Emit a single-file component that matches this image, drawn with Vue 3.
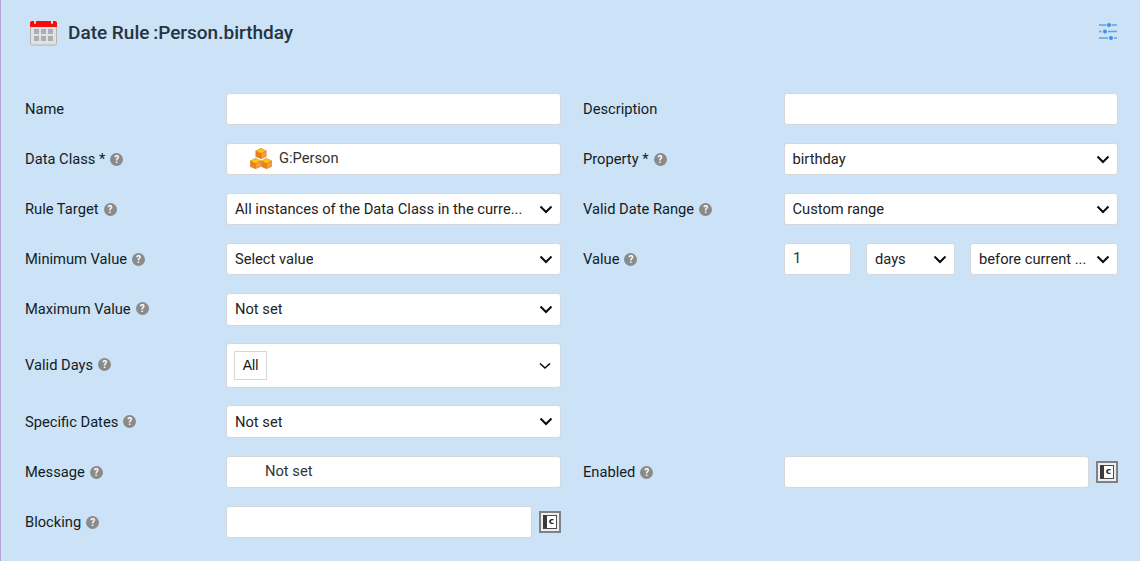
<script setup>
// each row has a left and optional right field
const rows = [
  { h: 32, mt: 0, left: { label: 'Name', type: 'input' }, right: { label: 'Description', type: 'input' } },
  { h: 32, mt: 18, left: { label: 'Data Class *', help: true, type: 'class', value: 'G:Person' }, right: { label: 'Property *', help: true, type: 'select', value: 'birthday' } },
  { h: 32, mt: 18, left: { label: 'Rule Target', help: true, type: 'select', value: 'All instances of the Data Class in the curre...' }, right: { label: 'Valid Date Range', help: true, type: 'select', value: 'Custom range' } },
  { h: 32, mt: 18, left: { label: 'Minimum Value', help: true, type: 'select', value: 'Select value' }, right: { label: 'Value', help: true, type: 'value' } },
  { h: 33, mt: 18, tight: true, left: { label: 'Maximum Value', help: true, type: 'select', value: 'Not set' } },
  { h: 45, mt: 17, tight: true, left: { label: 'Valid Days', help: true, type: 'multi', value: 'All' } },
  { h: 33, mt: 17, left: { label: 'Specific Dates', help: true, type: 'select', value: 'Not set' } },
  { h: 32, mt: 18, left: { label: 'Message', help: true, type: 'message', value: 'Not set' }, right: { label: 'Enabled', help: true, type: 'check' } },
  { h: 32, mt: 18, left: { label: 'Blocking', help: true, type: 'check' } },
]
</script>

<template>
  <div class="page">
    <header class="head">
      <svg class="cal" width="28" height="26" viewBox="0 0 28 26">
        <rect x="0.5" y="3" width="26" height="22" rx="1.500" fill="#dde2e6" stroke="#b3b3b3" />
        <path d="M0 7V3a2 2 0 0 1 2-2h23a2 2 0 0 1 2 2v4z" fill="#f40f0f" />
        <rect x="4" y="0" width="2" height="4" rx="1" fill="#f7dcdc" />
        <rect x="21" y="0" width="2" height="4" rx="1" fill="#f7dcdc" />
        <g fill="#aeaeae">
          <rect x="4" y="9" width="5" height="5" /><rect x="11" y="9" width="5" height="5" /><rect x="18" y="9" width="5" height="5" />
          <rect x="4" y="16" width="5" height="5" /><rect x="11" y="16" width="5" height="5" /><rect x="18" y="16" width="5" height="5" />
        </g>
      </svg>
      <h1 class="title">Date Rule <span class="colon">:Person.birthday</span></h1>
      <svg class="tune" width="20" height="18" viewBox="0 0 20 18" fill="#3a92e6">
        <path d="M1 3h7.500M13.500 3H19M1 9.500h2.500M10 9.500h9M1 16h9M16 16h3" stroke="#5da3e4" stroke-width="1.600" fill="none" />
        <circle cx="11" cy="3" r="2" />
        <circle cx="7" cy="9.500" r="2" />
        <circle cx="13" cy="16" r="2" />
      </svg>
    </header>

    <div class="form">
      <div v-for="(row, i) in rows" :key="i" class="row" :class="['mt' + row.mt, { tight: row.tight }]" :style="{ height: row.h + 'px' }">
        <template v-for="(f, side) in [row.left, row.right]" :key="side">
          <template v-if="f">
            <label class="lbl">{{ f.label }}<span v-if="f.help" class="help">?</span></label>
            <div class="cell">
              <div v-if="f.type === 'input'" class="box"></div>

              <div v-else-if="f.type === 'select'" class="box sel">
                <span class="txt">{{ f.value }}</span>
                <svg class="chev" width="14" height="9" viewBox="0 0 14 9"><path d="M1.500 1.500 7 7l5.500-5.500" /></svg>
              </div>

              <div v-else-if="f.type === 'class'" class="box cls">
                <svg class="cubes" width="22" height="21" viewBox="0 0 22 21">
                  <g v-for="c in [[5.5, 0], [0, 10], [11, 10]]" :key="c[0]" :transform="`translate(${c[0]} ${c[1]})`" stroke="#cf7014" stroke-width=".5">
                    <path d="M.3 3 5.500 5.500V10.700L.3 8.500z" fill="#e8811f" />
                    <path d="M10.700 3 5.500 5.500V10.700L10.700 8.500z" fill="#fb9c3c" />
                    <path d="M5.500 .3 10.700 3 5.500 5.500 .3 3z" fill="#ffc60a" />
                  </g>
                </svg>
                <span>{{ f.value }}</span>
              </div>

              <div v-else-if="f.type === 'multi'" class="box multi">
                <span class="tag">All</span>
                <svg class="chev thin" width="12" height="8" viewBox="0 0 12 8"><path d="M1 1.500 6 6l5-4.500" /></svg>
              </div>

              <div v-else-if="f.type === 'message'" class="box msg">{{ f.value }}</div>

              <div v-else-if="f.type === 'check'" class="checked">
                <div class="box"></div>
                <span class="cbtn"><span class="cin">c</span></span>
              </div>

              <div v-else-if="f.type === 'value'" class="vals">
                <div class="box num">1</div>
                <div class="box sel days">
                  <span class="txt">days</span>
                  <svg class="chev" width="14" height="9" viewBox="0 0 14 9"><path d="M1.500 1.500 7 7l5.500-5.500" /></svg>
                </div>
                <div class="box sel when">
                  <span class="txt">before current ...</span>
                  <svg class="chev" width="14" height="9" viewBox="0 0 14 9"><path d="M1.500 1.500 7 7l5.500-5.500" /></svg>
                </div>
              </div>
            </div>
          </template>
        </template>
      </div>
    </div>
  </div>
</template>

<style>
html, body { margin: 0; background: #cce2f6; }
</style>

<style scoped>
.page {
  width: 1140px;
  height: 561px;
  box-sizing: border-box;
  background: #cce2f6;
  border-left: 1px solid #b3a4d6;
  padding: 0 22px 0 24px;
  font-family: Roboto, "Liberation Sans", sans-serif;
  font-size: 14.700px;
  color: #121c26;
  overflow: hidden;
}
.head {
  display: flex;
  align-items: center;
  height: 93px;
  padding: 0 0 29px 5px;
  box-sizing: border-box;
}
.cal { flex: none; margin-right: 10px; margin-top: 1px; }
.title {
  margin: 0;
  font-size: 19px;
  font-weight: 500;
  color: #253343;
  flex: 1;
}
.colon { margin-left: -1px; }
.tune { flex: none; margin-top: -3px; }

.row {
  display: grid;
  grid-template-columns: 201px 335px 223px 334px;
  align-items: center;
}
.mt18 { margin-top: 18px; }
.mt17 { margin-top: 17px; }
.mt0 { margin-top: 0; }
.lbl {
  display: flex;
  align-items: center;
  white-space: nowrap;
}
.row .lbl:nth-child(3) { padding-left: 22px; }
.tight .lbl, .tight .txt { margin-bottom: 2px; }
.help {
  width: 13px;
  height: 13px;
  margin-left: 5px;
  border-radius: 50%;
  background: #8a8a8a;
  color: #fff;
  font-size: 10px;
  font-weight: 700;
  line-height: 13px;
  text-align: center;
}
.cell, .cell > .box { height: 100%; }
.cell { min-width: 0; }

.box {
  box-sizing: border-box;
  background: #fff;
  border: 1px solid #d5d8da;
  border-radius: 3px;
  height: 100%;
}
.sel {
  display: flex;
  align-items: center;
  justify-content: space-between;
  padding: 0 7px 0 8px;
  color: #222;
}
.row .cell:nth-child(4) > .sel { padding-left: 7.500px; }
.txt { white-space: nowrap; overflow: hidden; }
.chev { flex: none; fill: none; stroke: #0a0a0a; stroke-width: 2; }
.chev.thin { stroke-width: 1.600; margin-right: 1px; }
.cls {
  display: flex;
  align-items: center;
  gap: 7px;
  padding-left: 23px;
  color: #333;
}
.cls span { margin-bottom: 2px; }
.cubes { flex: none; margin-bottom: 1px; }
.multi {
  display: flex;
  align-items: center;
  justify-content: space-between;
  padding: 0 8px 0 7px;
}
.tag {
  box-sizing: border-box;
  width: 33px;
  height: 29px;
  line-height: 27px;
  border: 1px solid #d8d8d8;
  font-family: "Liberation Sans", sans-serif;
  font-size: 14px;
  text-align: center;
  color: #111;
}
.msg {
  display: flex;
  align-items: center;
  padding: 0 0 2px 38px;
  color: #333;
}
.checked {
  display: flex;
  align-items: center;
  height: 100%;
}
.checked .box { flex: 1; }
.cbtn {
  flex: none;
  box-sizing: border-box;
  width: 22px;
  height: 22px;
  margin-left: 7px;
  border: 2px solid #7f8284;
  background: #eeeeee;
  display: flex;
  align-items: center;
  justify-content: center;
}
.cin {
  box-sizing: border-box;
  width: 14px;
  height: 14px;
  background: #fff;
  border: 1px solid #4a4a4a;
  border-left: 4px solid #3a3a3a;
  font-family: "DejaVu Sans", sans-serif;
  font-size: 9px;
  font-weight: 700;
  line-height: 10px;
  text-align: center;
  color: #222;
}
.vals {
  display: flex;
  height: 100%;
}
.num {
  width: 67px;
  padding: 0 8px;
  line-height: 29px;
  color: #333;
}
.days { width: 89px; margin-left: 15px; }
.when { width: 148px; margin-left: 15px; padding-right: 7px; }
</style>
